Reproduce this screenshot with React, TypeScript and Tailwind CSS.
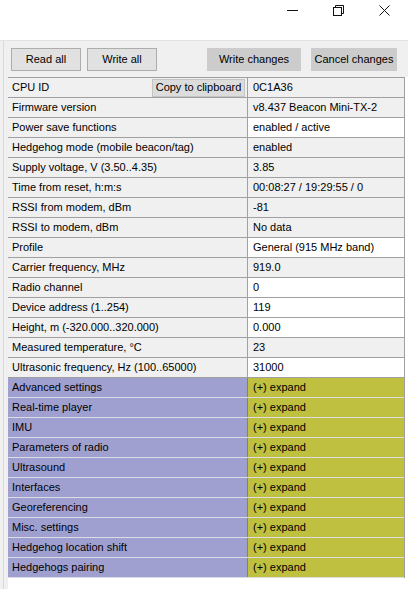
import React from "react";

type Row = {
	label: string;
	value: string;
	white?: boolean;
};

const rows: Row[] = [
	{ label: "CPU ID", value: "0C1A36" },
	{ label: "Firmware version", value: "v8.437 Beacon Mini-TX-2" },
	{ label: "Power save functions", value: "enabled / active", white: true },
	{ label: "Hedgehog mode (mobile beacon/tag)", value: "enabled" },
	{ label: "Supply voltage, V (3.50..4.35)", value: "3.85" },
	{ label: "Time from reset, h:m:s", value: "00:08:27 / 19:29:55 / 0" },
	{ label: "RSSI from modem, dBm", value: "-81" },
	{ label: "RSSI to modem, dBm", value: "No data" },
	{ label: "Profile", value: "General (915 MHz band)", white: true },
	{ label: "Carrier frequency, MHz", value: "919.0" },
	{ label: "Radio channel", value: "0", white: true },
	{ label: "Device address (1..254)", value: "119", white: true },
	{ label: "Height, m (-320.000..320.000)", value: "0.000", white: true },
	{ label: "Measured temperature, °C", value: "23" },
	{ label: "Ultrasonic frequency, Hz (100..65000)", value: "31000", white: true },
];

const groups = [
	"Advanced settings",
	"Real-time player",
	"IMU",
	"Parameters of radio",
	"Ultrasound",
	"Interfaces",
	"Georeferencing",
	"Misc. settings",
	"Hedgehog location shift",
	"Hedgehogs pairing",
];

const CaptionButtons = () => (
	<div className="flex justify-end h-[40px] bg-white pr-[1px]">
		{/* minimize */}
		<div className="w-[46px] h-[21px] flex items-center justify-center">
			<svg width="11" height="11" viewBox="0 0 11 11">
				<path d="M0 5.5H11" stroke="#111" strokeWidth="1" />
			</svg>
		</div>
		{/* restore */}
		<div className="w-[46px] h-[21px] flex items-center justify-center">
			<svg width="11" height="11" viewBox="0 0 11 11" fill="none">
				<rect x="0.5" y="2.5" width="8" height="8" stroke="#111" />
				<path d="M2.5 2.5V0.5H10.5V8.5H8.5" stroke="#111" />
			</svg>
		</div>
		{/* close */}
		<div className="w-[46px] h-[21px] flex items-center justify-center">
			<svg width="11" height="11" viewBox="0 0 11 11">
				<path d="M0.5 0.5L10.5 10.5M10.5 0.5L0.5 10.5" stroke="#111" strokeWidth="1" />
			</svg>
		</div>
	</div>
);

const ToolButton = ({ label, width, dark }: { label: string; width: string; dark?: boolean }) => (
	<button
		className={
			dark
				? `${width} h-[23px] bg-[#cccccc] border border-[#cccccc] text-black text-[11px] leading-none whitespace-nowrap`
				: `${width} h-[23px] bg-[#e1e1e1] border border-[#adadad] text-black text-[11px] leading-none whitespace-nowrap`
		}
	>
		{label}
	</button>
);

export default function App() {
	return (
		<div className="w-[408px] h-[589px] overflow-hidden bg-white font-['Liberation_Sans',Arial,sans-serif] text-[11px] text-black">
			<CaptionButtons />

			<div className="flex flex-col h-[549px] bg-[#f0f0f0] border-t border-[#e3e3e3]">
				{/* toolbar */}
				<div className="flex items-center h-[36px] pl-[11px] shrink-0">
					<ToolButton label="Read all" width="w-[70px]" />
					<div className="w-[6px]" />
					<ToolButton label="Write all" width="w-[70px]" />
					<div className="w-[50px]" />
					<ToolButton label="Write changes" width="w-[94px]" dark />
					<div className="w-[10px]" />
					<ToolButton label="Cancel changes" width="w-[86px]" dark />
				</div>

				<div className="flex flex-1">
					{/* left splitter strip */}
					<div className="w-[8px] shrink-0 border-l border-[#d8d8d8] ml-[3px] -mt-[36px]" />

					{/* property grid */}
					<div className="flex-1 bg-white -ml-[3px]">
						<div className="w-[397px] border-t border-r border-[#a0a0a0]">
							{rows.map((r, i) => (
								<div key={r.label} className="flex h-[20px] border-b border-[#a0a0a0]">
									<div className="w-[240px] shrink-0 flex items-center justify-between bg-[#f0f0f0] border-r border-[#a0a0a0] pl-[4px] pr-[2px]">
										<span>{r.label}</span>
										{i === 0 && (
											<button className="w-[93px] h-[18px] bg-[#dcdcdc] border border-[#c4c4c4] text-[11px] leading-none whitespace-nowrap">
												Copy to clipboard
											</button>
										)}
									</div>
									<div
										className={
											r.white
												? "flex-1 flex items-center pl-[5px] bg-white"
												: "flex-1 flex items-center pl-[5px] bg-[#f0f0f0]"
										}
									>
										{r.value}
									</div>
								</div>
							))}
							{groups.map((g) => (
								<div key={g} className="flex h-[20px] border-b border-[#dcdce4]">
									<div className="w-[240px] shrink-0 flex items-center bg-[#a0a0d0] border-r border-[#808080] pl-[4px]">
										{g}
									</div>
									<div className="flex-1 flex items-center pl-[5px] bg-[#c0c040]">(+) expand</div>
								</div>
							))}
						</div>
					</div>
				</div>
			</div>
		</div>
	);
}
